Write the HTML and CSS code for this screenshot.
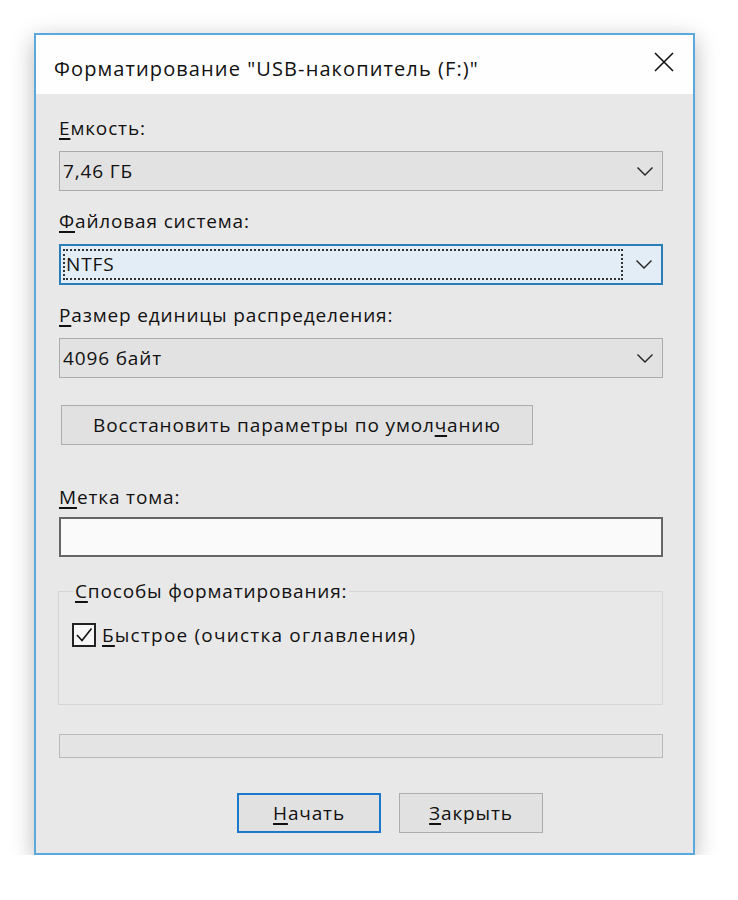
FILE: index.html
```html
<!DOCTYPE html>
<html lang="ru">
<head>
<meta charset="utf-8">
<title>Форматирование</title>
<link rel="stylesheet" href="styles.css">
</head>
<body>
<div class="dialog">
  <div class="titlebar">
    <span class="title">Форматирование "USB-накопитель (F:)"</span>
    <span class="close">
      <svg width="20" height="20" viewBox="0 0 20 20"><path d="M1 1 L19 19 M19 1 L1 19" stroke="#111" stroke-width="1.6" fill="none"/></svg>
    </span>
  </div>
  <div class="content">
    <div class="label first"><u>Е</u>мкость:</div>
    <div class="combo">
      <span class="value">7,46 ГБ</span>
      <svg class="chev" width="16" height="9" viewBox="0 0 16 9"><path d="M0.5 0.5 L8 8 L15.5 0.5" stroke="#222" stroke-width="1.4" fill="none"/></svg>
    </div>
    <div class="label"><u>Ф</u>айловая система:</div>
    <div class="combo focused">
      <span class="value focusrect">NTFS</span>
      <svg class="chev" width="16" height="9" viewBox="0 0 16 9"><path d="M0.5 0.5 L8 8 L15.5 0.5" stroke="#222" stroke-width="1.4" fill="none"/></svg>
    </div>
    <div class="label"><u>Р</u>азмер единицы распределения:</div>
    <div class="combo">
      <span class="value">4096 байт</span>
      <svg class="chev" width="16" height="9" viewBox="0 0 16 9"><path d="M0.5 0.5 L8 8 L15.5 0.5" stroke="#222" stroke-width="1.4" fill="none"/></svg>
    </div>
    <div class="btn restore">Восстановить параметры по умол<u>ч</u>анию</div>
    <div class="label volume"><u>М</u>етка тома:</div>
    <div class="textbox"></div>
    <fieldset class="group">
      <legend><u>С</u>пособы форматирования:</legend>
      <div class="check">
        <span class="box"><svg width="20" height="20" viewBox="0 0 20 20"><path d="M3 10 L8 15.5 L17.5 3.5" stroke="#111" stroke-width="1.6" fill="none"/></svg></span>
        <span class="check-text"><u>Б</u>ыстрое (очистка оглавления)</span>
      </div>
    </fieldset>
    <div class="progress"></div>
    <div class="actions">
      <div class="btn primary"><u>Н</u>ачать</div>
      <div class="btn"><u>З</u>акрыть</div>
    </div>
  </div>
</div>
</body>
</html>
```
FILE: styles.css
```css
html, body {
  margin: 0;
  padding: 0;
  background: #ffffff;
}
body {
  font-family: "Open Sans", "Noto Sans", "Liberation Sans", sans-serif;
  font-size: 19px;
  line-height: 26px;
  letter-spacing: 0.85px;
  color: #111;
}
u {
  text-decoration: underline;
  text-decoration-thickness: 1.5px;
  text-underline-offset: 3px;
}
.dialog {
  margin: 33px 0 0 34px;
  width: 657px;
  border: 2px solid #5aa8dd;
  background: #e9e8e8;
  box-shadow: 0 6px 22px rgba(0, 0, 0, 0.28);
}
.titlebar {
  height: 59px;
  background: #fefefe;
  display: flex;
  align-items: center;
  justify-content: space-between;
  padding: 0 19px 0 18px;
}
.title {
  margin-top: 9px;
  font-size: 20px;
  letter-spacing: 1.1px;
}
.close {
  display: flex;
  margin-bottom: 5px;
}
.content {
  padding: 21px 30px 20px 23px;
}
.label {
  margin: 17px 0 10px 0;
}
.label.first {
  margin-top: 0;
}
.combo {
  height: 38px;
  border: 1px solid #acacac;
  background: #e2e2e2;
  display: flex;
  align-items: center;
  justify-content: space-between;
  padding: 0 9px 0 2px;
}
.combo .value {
  padding-left: 1px;
}
.combo.focused {
  height: 37px;
  border: 2px solid #2a7db7;
  background: #e3edf5;
  padding-left: 2px;
}
.focusrect {
  flex: 1;
  height: 27px;
  line-height: 27px;
  border: 2px dotted #333;
  margin-right: 13px;
  padding-left: 0;
}
.btn {
  height: 38px;
  border: 1px solid #adadad;
  background: #e1e1e1;
  display: flex;
  align-items: center;
  justify-content: center;
}
.restore {
  width: 470px;
  margin: 27px 0 0 2px;
}
.label.volume {
  margin-top: 39px;
  margin-bottom: 7px;
}
.textbox {
  height: 36px;
  border: 2px solid #666;
  background: #fafafa;
}
.group {
  margin: 21px 0 0 -1px;
  padding: 18px 14px 56px 13px;
  border: 1px solid #d6d6d6;
  min-width: 0;
}
.group legend {
  padding: 0 2px;
  margin-left: 1px;
}
.check {
  display: flex;
  align-items: center;
  gap: 6px;
}
.check-text {
  letter-spacing: 1.2px;
}
.box {
  width: 20px;
  height: 20px;
  border: 2px solid #222;
  background: #f7f7f7;
  display: flex;
}
.progress {
  margin-top: 29px;
  height: 22px;
  border: 1px solid #b9b9b9;
  background: #e4e4e4;
}
.actions {
  margin-top: 35px;
  display: flex;
  gap: 18px;
  padding-left: 178px;
}
.actions .btn {
  width: 142px;
}
.actions .btn.primary {
  width: 140px;
  height: 36px;
  border: 2px solid #1c79c9;
}
```
